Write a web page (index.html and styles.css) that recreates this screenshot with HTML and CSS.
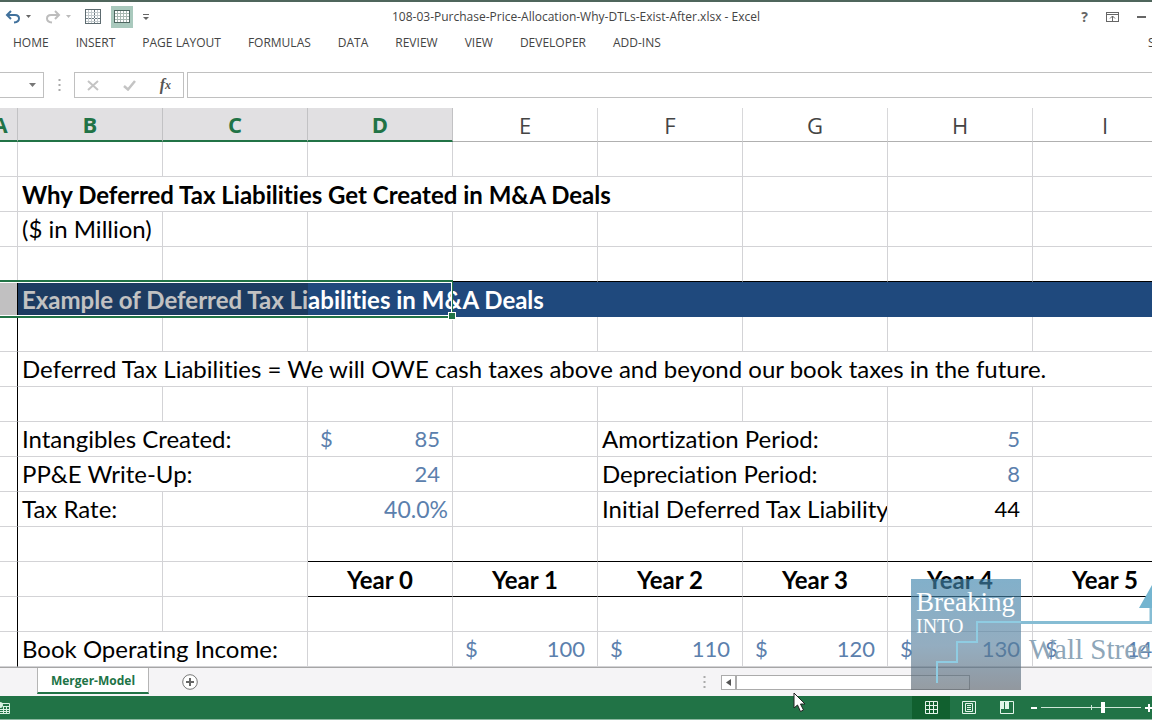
FILE: index.html
```html
<!DOCTYPE html>
<html lang="en">
<head>
<meta charset="utf-8">
<title>108-03-Purchase-Price-Allocation-Why-DTLs-Exist-After.xlsx - Excel</title>
<link rel="stylesheet" href="styles.css">
</head>
<body>
<div class="app">
  <header class="titlebar">
    <div class="quick">
      <button class="icon-btn undo" aria-label="Undo"><svg width="16" height="14" viewBox="0 0 16 14"><path d="M6 1L2 5l4 4M2.500 5H10q4 0 4 3.500T9 12.500" fill="none" stroke="#41719c" stroke-width="2"/></svg></button>
      <button class="icon-btn caret" aria-label="Undo list"><svg width="5" height="3"><path d="M0 0h5L2.500 3z" fill="#666"/></svg></button>
      <button class="icon-btn redo" aria-label="Redo"><svg width="16" height="14" viewBox="0 0 16 14"><path d="M10 1l4 4-4 4M13.500 5H6Q2 5 2 8.500T7 12.500" fill="none" stroke="#bdbdbd" stroke-width="2"/></svg></button>
      <button class="icon-btn caret2" aria-label="Redo list"><svg width="5" height="3"><path d="M0 0h5L2.500 3z" fill="#bbb"/></svg></button>
      <button class="icon-btn borders" aria-label="Borders"><svg width="16" height="16"><rect x=".5" y=".5" width="15" height="14" fill="#fff" stroke="#5d6b70"/><path d="M3.500 1v13M6.500 1v13M12.500 1v13M1 3.500h14M1 6.500h14M1 12.500h14" stroke="#c3cacd"/><path d="M9.500 1v13M1 9.500h14" stroke="#6b7880" stroke-dasharray="2 1"/></svg></button>
      <button class="icon-btn grid-on" aria-label="View gridlines"><svg width="16" height="13"><rect x=".5" y=".5" width="15" height="12" fill="#fff" stroke="#4d6660"/><path d="M3.500 1v11M6.500 1v11M9.500 1v11M12.500 1v11M1 3.500h14M1 6.500h14M1 9.500h14" stroke="#a9b9b3"/></svg></button>
      <button class="icon-btn more" aria-label="Customize toolbar"><svg width="6" height="6"><path d="M0 .5h6" stroke="#666"/><path d="M0 3h6L3 6z" fill="#666"/></svg></button>
    </div>
    <h1 class="doc-title">108-03-Purchase-Price-Allocation-Why-DTLs-Exist-After.xlsx - Excel</h1>
    <div class="window-btns">
      <button class="icon-btn help" aria-label="Help">?</button>
      <button class="icon-btn" aria-label="Ribbon options"><svg width="13" height="10"><rect x=".5" y=".5" width="12" height="9" fill="none" stroke="#666"/><path d="M1 2.500h11M6.500 9V4M4 6.500L6.500 4 9 6.500" fill="none" stroke="#666"/></svg></button>
      <button class="icon-btn" aria-label="Minimize"><svg width="9" height="2"><path d="M0 1h9" stroke="#666" stroke-width="2"/></svg></button>
    </div>
  </header>
  <nav class="tabs">
    <button>HOME</button><button>INSERT</button><button>PAGE LAYOUT</button><button>FORMULAS</button><button>DATA</button><button>REVIEW</button><button>VIEW</button><button>DEVELOPER</button><button>ADD-INS</button>
    <a class="account" href="#">S</a>
  </nav>
  <div class="formula">
    <div class="namebox"><button class="icon-btn" aria-label="Name list"><svg width="7" height="4"><path d="M0 0h7L3.500 4z" fill="#777"/></svg></button></div>
    <svg class="dots" width="3" height="12"><path d="M1.500 0v12" stroke="#aaa" stroke-width="2" stroke-dasharray="2 3"/></svg>
    <div class="fx-box">
      <button class="icon-btn" aria-label="Cancel"><svg width="12" height="11"><path d="M1 1l10 9M11 1L1 10" stroke="#c4c4c4" stroke-width="2"/></svg></button>
      <button class="icon-btn" aria-label="Enter"><svg width="13" height="11"><path d="M1 6l4 3.500L12 1" fill="none" stroke="#c4c4c4" stroke-width="2.500"/></svg></button>
      <button class="icon-btn fx" aria-label="Insert function">f<sub>x</sub></button>
    </div>
    <input class="formula-input" type="text" aria-label="Formula bar">
  </div>
  <main class="sheet">
    <table class="grid">
      <colgroup><col class="narrow"><col><col><col><col><col><col><col><col></colgroup>
      <thead><tr><th class="sel first"><span>A</span></th><th class="sel">B</th><th class="sel">C</th><th class="sel">D</th><th>E</th><th>F</th><th>G</th><th>H</th><th>I</th></tr></thead>
      <tbody>
        <tr><td></td><td></td><td></td><td></td><td></td><td></td><td></td><td></td><td></td></tr>
        <tr><td></td><td colspan="5" class="bold">Why Deferred Tax Liabilities Get Created in M&amp;A Deals</td><td></td><td></td><td></td></tr>
        <tr><td></td><td>($ in Million)</td><td></td><td></td><td></td><td></td><td></td><td></td><td></td></tr>
        <tr class="before-band"><td></td><td></td><td></td><td></td><td></td><td></td><td></td><td></td><td></td></tr>
        <tr class="band"><td class="edge"></td><td colspan="8" class="bold">Example of Deferred Tax Liabilities in M&amp;A Deals<div class="shade"></div><div class="selection"><i class="handle"></i></div></td></tr>
        <tr><td class="edge"></td><td></td><td></td><td></td><td></td><td></td><td></td><td></td><td></td></tr>
        <tr><td class="edge"></td><td colspan="8">Deferred Tax Liabilities = We will OWE cash taxes above and beyond our book taxes in the future.</td></tr>
        <tr><td class="edge"></td><td></td><td></td><td></td><td></td><td></td><td></td><td></td><td></td></tr>
        <tr><td class="edge"></td><td colspan="2">Intangibles Created:</td><td class="num blue"><div><span>$</span><span>85</span></div></td><td></td><td colspan="2">Amortization Period:</td><td class="num blue">5</td><td></td></tr>
        <tr><td class="edge"></td><td colspan="2">PP&amp;E Write-Up:</td><td class="num blue">24</td><td></td><td colspan="2">Depreciation Period:</td><td class="num blue">8</td><td></td></tr>
        <tr><td class="edge"></td><td>Tax Rate:</td><td></td><td class="pct blue">40.0%</td><td></td><td colspan="2">Initial Deferred Tax Liability:</td><td class="num">44</td><td></td></tr>
        <tr class="before-years"><td class="edge"></td><td></td><td></td><td></td><td></td><td></td><td></td><td></td><td></td></tr>
        <tr class="years"><td class="edge"></td><td></td><td></td><td>Year 0</td><td>Year 1</td><td>Year 2</td><td>Year 3</td><td>Year 4</td><td>Year 5</td></tr>
        <tr><td class="edge"></td><td></td><td></td><td></td><td></td><td></td><td></td><td></td><td></td></tr>
        <tr><td class="edge"></td><td colspan="2">Book Operating Income:</td><td></td><td class="num blue"><div><span>$</span><span>100</span></div></td><td class="num blue"><div><span>$</span><span>110</span></div></td><td class="num blue"><div><span>$</span><span>120</span></div></td><td class="num blue"><div><span>$</span><span>130</span></div></td><td class="num blue"><div><span>$</span><span>140</span></div></td></tr>
      </tbody>
    </table>
  </main>
  <div class="sheetbar">
    <button class="sheet-tab">Merger-Model</button>
    <button class="icon-btn add" aria-label="New sheet"><svg width="16" height="16"><circle cx="8" cy="8" r="7.300" fill="#fff" stroke="#777"/><path d="M8 4v8M4 8h8" stroke="#666" stroke-width="2"/></svg></button>
    <div class="hscroll">
      <svg width="3" height="12"><path d="M1.500 0v12" stroke="#aaa" stroke-width="2" stroke-dasharray="2 3"/></svg>
      <div class="track"><button class="icon-btn" aria-label="Scroll left"><svg width="5" height="7"><path d="M5 0v7L0 3.500z" fill="#555"/></svg></button></div>
    </div>
  </div>
  <footer class="status">
    <svg class="macro" width="11" height="14"><path d="M0 2.500h9.500v10H0M3 5.500h6M0 8.500h9M0 10.500h9M3.500 5v8M6.500 5v8" fill="none" stroke="#d9f0e2"/><circle cx="0" cy="4" r="3" fill="#d9f0e2"/></svg>
    <div class="views">
      <button class="icon-btn active" aria-label="Normal"><svg width="13" height="13"><path d="M.5 .5h12v12H.5zM4.500 0v13M8.500 0v13M0 4.500h13M0 8.500h13" fill="none" stroke="#e4f5ea"/></svg></button>
      <button class="icon-btn" aria-label="Page layout"><svg width="14" height="13"><path d="M.5 .5h13v12H.5zM3.500 2.500h7v8h-7zM5 4.500h4M5 6.500h4M5 8.500h4" fill="none" stroke="#e4f5ea"/></svg></button>
      <button class="icon-btn" aria-label="Page break preview"><svg width="14" height="13"><path d="M.5 .5h13v12H.5z" fill="none" stroke="#e4f5ea"/><path d="M0 0h4v8H0zM5 0h4v8H5z" fill="#e4f5ea"/></svg></button>
    </div>
    <div class="zoom">
      <button class="icon-btn" aria-label="Zoom out"><svg width="6" height="2"><path d="M0 1h6" stroke="#fff" stroke-width="2"/></svg></button>
      <input type="range" min="0" max="100" value="62" aria-label="Zoom">
      <button class="icon-btn" aria-label="Zoom in"><svg width="8" height="8"><path d="M0 4h8M4 0v8" stroke="#fff" stroke-width="2"/></svg></button>
    </div>
  </footer>
  <div class="watermark">
    <div class="square"><p class="breaking">Breaking</p><p class="into">INTO</p></div>
    <p class="wall">Wall Stree</p>
    <svg class="stairs" width="241" height="111"><path d="M26 104V83h20V63h20V43h45" fill="none" stroke="#8fcce2" stroke-width="2"/><path d="M110 43.500h130V29" fill="none" stroke="#86bdd4" stroke-width="3"/><path d="M228 29L241 6v23z" fill="#74b5d0"/></svg>
  </div>
  <svg class="pointer" width="14" height="21" viewBox="0 0 14 21"><path d="M1 1v15l3.500-3 3 6.500 3-1.500-3-6H12z" fill="#fff" stroke="#222"/></svg>
</div>
</body>
</html>
```

FILE: styles.css
```css
* { box-sizing: border-box; }
body { margin: 0; background: #fff; color: #444; font-family: "Open Sans", "Noto Sans", sans-serif; }
.app { position: relative; display: flex; flex-direction: column; height: 100vh; min-height: 480px; overflow: hidden; border-top: 2px solid #4f665c; }
button { font: inherit; color: inherit; background: none; border: 0; padding: 0; margin: 0; }
.icon-btn { display: flex; align-items: center; justify-content: center; flex: none; }
svg { display: block; }

.titlebar { display: grid; grid-template-columns: 1fr auto 1fr; align-items: center; height: 29px; flex: none; }
.quick { display: flex; align-items: center; padding-left: 5px; }
.caret { margin-left: 5px; }
.redo { margin-left: 14px; }
.caret2 { margin-left: 5px; }
.borders { margin-left: 14px; }
.grid-on { margin-left: 10px; width: 22px; height: 22px; background: #a9c9bd; }
.more { margin-left: 10px; }
.doc-title { margin: 0; font-size: 12px; font-weight: 400; line-height: 16px; }
.window-btns { display: flex; align-items: center; justify-content: flex-end; gap: 18px; padding-right: 6px; }
.help { font-size: 14px; font-weight: 700; color: #666; }

.tabs { display: flex; align-items: center; height: 22px; flex: none; padding-left: 13px; gap: 27px; font-size: 12px; overflow: hidden; }
.account { margin-left: auto; width: 4px; overflow: hidden; color: #444; text-decoration: none; }

.formula { display: flex; align-items: center; height: 26px; margin: 19px 0 10px; flex: none; }
.namebox { width: 44px; height: 26px; border: 1px solid #c0c0c0; border-left: 0; display: flex; align-items: center; justify-content: flex-end; padding-right: 7px; }
.dots { margin: 0 13px 0 14px; }
.fx-box { display: flex; align-items: center; justify-content: space-between; width: 110px; height: 26px; border: 1px solid #c0c0c0; padding: 0 12px; }
.fx { font: italic 700 16px/18px "Liberation Serif", serif; color: #555; }
.fx sub { font-size: 12px; line-height: 8px; }
.formula-input { flex: 1; min-width: 0; height: 26px; margin-left: 3px; border: 1px solid #c0c0c0; border-right: 0; outline: 0; }

.sheet { flex: 1; min-height: 0; overflow: hidden; }
.grid { table-layout: fixed; width: 1178px; border-collapse: separate; border-spacing: 0; color: #000; font: 24px/32px Lato, "Open Sans", sans-serif; font-variant-ligatures: none; }
.grid col { width: 145px; }
.grid col.narrow { width: 18px; }
.grid th { height: 34px; padding: 0; border-right: 1px solid #d8d8da; border-bottom: 1px solid #b0b0b0; font: 22px/30px "Open Sans", sans-serif; color: #444; }
.grid th.sel { background: #e1e0e2; color: #217346; font-weight: 700; border-right-color: #c2c2c4; border-bottom: 2px solid #217346; }
.grid th.first { overflow: hidden; }
.first span { display: block; margin-left: -8px; width: 16px; }
.grid td { height: 35px; padding: 0 0 0 4px; border-right: 1px solid #d3d3d6; border-bottom: 1px solid #d3d3d6; white-space: nowrap; overflow: hidden; }
.grid td.edge { border-right-color: #000; }
.grid .bold { font-weight: 700; padding: 2px 0 0 4px; }
.grid .blue { color: #5b80ad; }
.grid .num { text-align: right; padding: 0 12px; font-size: 22px; }
.num div { display: flex; justify-content: space-between; }
.grid .pct { text-align: right; padding-right: 4px; font-size: 23px; }
.grid .before-band td { border-bottom-color: #000; }
.grid .band td { background: #1f497d; color: #fff; border-bottom-color: #1f497d; position: relative; overflow: visible; }
.grid .band td.edge { background: #c1c0c1; }
.shade { position: absolute; left: 0; top: 0; bottom: -1px; width: 290px; background: rgba(20, 20, 20, .26); }
.selection { position: absolute; left: -22px; top: -2px; bottom: -2px; width: 457px; border: 2px solid #217346; border-right-width: 1px; box-shadow: inset 0 0 0 1px #fff; }
.handle { position: absolute; right: -3px; bottom: -3px; width: 6px; height: 6px; background: #217346; outline: 1px solid #fff; }
.grid .before-years td:nth-child(n+4), .grid .years td:nth-child(n+4) { border-bottom-color: #000; }
.grid .years td { text-align: center; font-weight: 700; padding: 2px 0 0; }

.sheetbar { display: flex; align-items: flex-start; height: 29px; flex: none; background: #f5f4f6; border-top: 1px solid #a6a6a6; padding-left: 37px; }
.sheet-tab { height: 26px; width: 112px; background: #fff; border: 1px solid #b5b5b5; border-top: 0; border-bottom: 2px solid #217346; color: #217346; font-size: 12px; font-weight: 700; }
.add { margin: 6px 0 0 33px; }
.hscroll { display: flex; align-items: center; gap: 15px; height: 28px; margin-left: auto; margin-right: 182px; }
.track { width: 249px; height: 15px; border: 1px solid #ababab; background: #fff; }
.track button { width: 15px; height: 13px; border-right: 2px solid #ababab; }

.status { display: flex; align-items: center; justify-content: flex-end; height: 24px; flex: none; background: #217346; border-bottom: 1px solid #8cb8a0; }
.macro { margin-right: auto; }
.views { display: flex; }
.views button { width: 38px; height: 23px; }
.views .active { background: #11602f; }
.zoom { display: flex; align-items: center; gap: 4px; padding-left: 5px; margin-right: -1px; }
.zoom input { appearance: none; width: 100px; height: 14px; margin: 0; background: linear-gradient(#cfe6d8, #cfe6d8) center / 100% 1px no-repeat, linear-gradient(#cfe6d8, #cfe6d8) center / 1px 5px no-repeat; }
.zoom input::-webkit-slider-thumb { appearance: none; width: 4px; height: 11px; background: #fff; }

.watermark { position: absolute; right: 0; bottom: 30px; width: 241px; height: 111px; overflow: hidden; pointer-events: none; font-family: "Liberation Serif", serif; }
.watermark p { margin: 0; }
.square { width: 110px; height: 111px; padding: 8px 0 0 5px; color: #fff; background: linear-gradient(rgba(65, 135, 175, .66), rgba(85, 125, 155, .63) 60%, rgba(85, 95, 105, .62)); }
.breaking { font-size: 27px; line-height: 30px; }
.into { font-size: 20px; line-height: 18px; }
.wall { position: absolute; left: 118px; top: 53px; font-size: 29px; line-height: 34px; color: #8ea6b8; white-space: nowrap; }
.stairs { position: absolute; left: 0; top: 0; }
.pointer { position: absolute; left: 793px; top: 690px; pointer-events: none; }
```
